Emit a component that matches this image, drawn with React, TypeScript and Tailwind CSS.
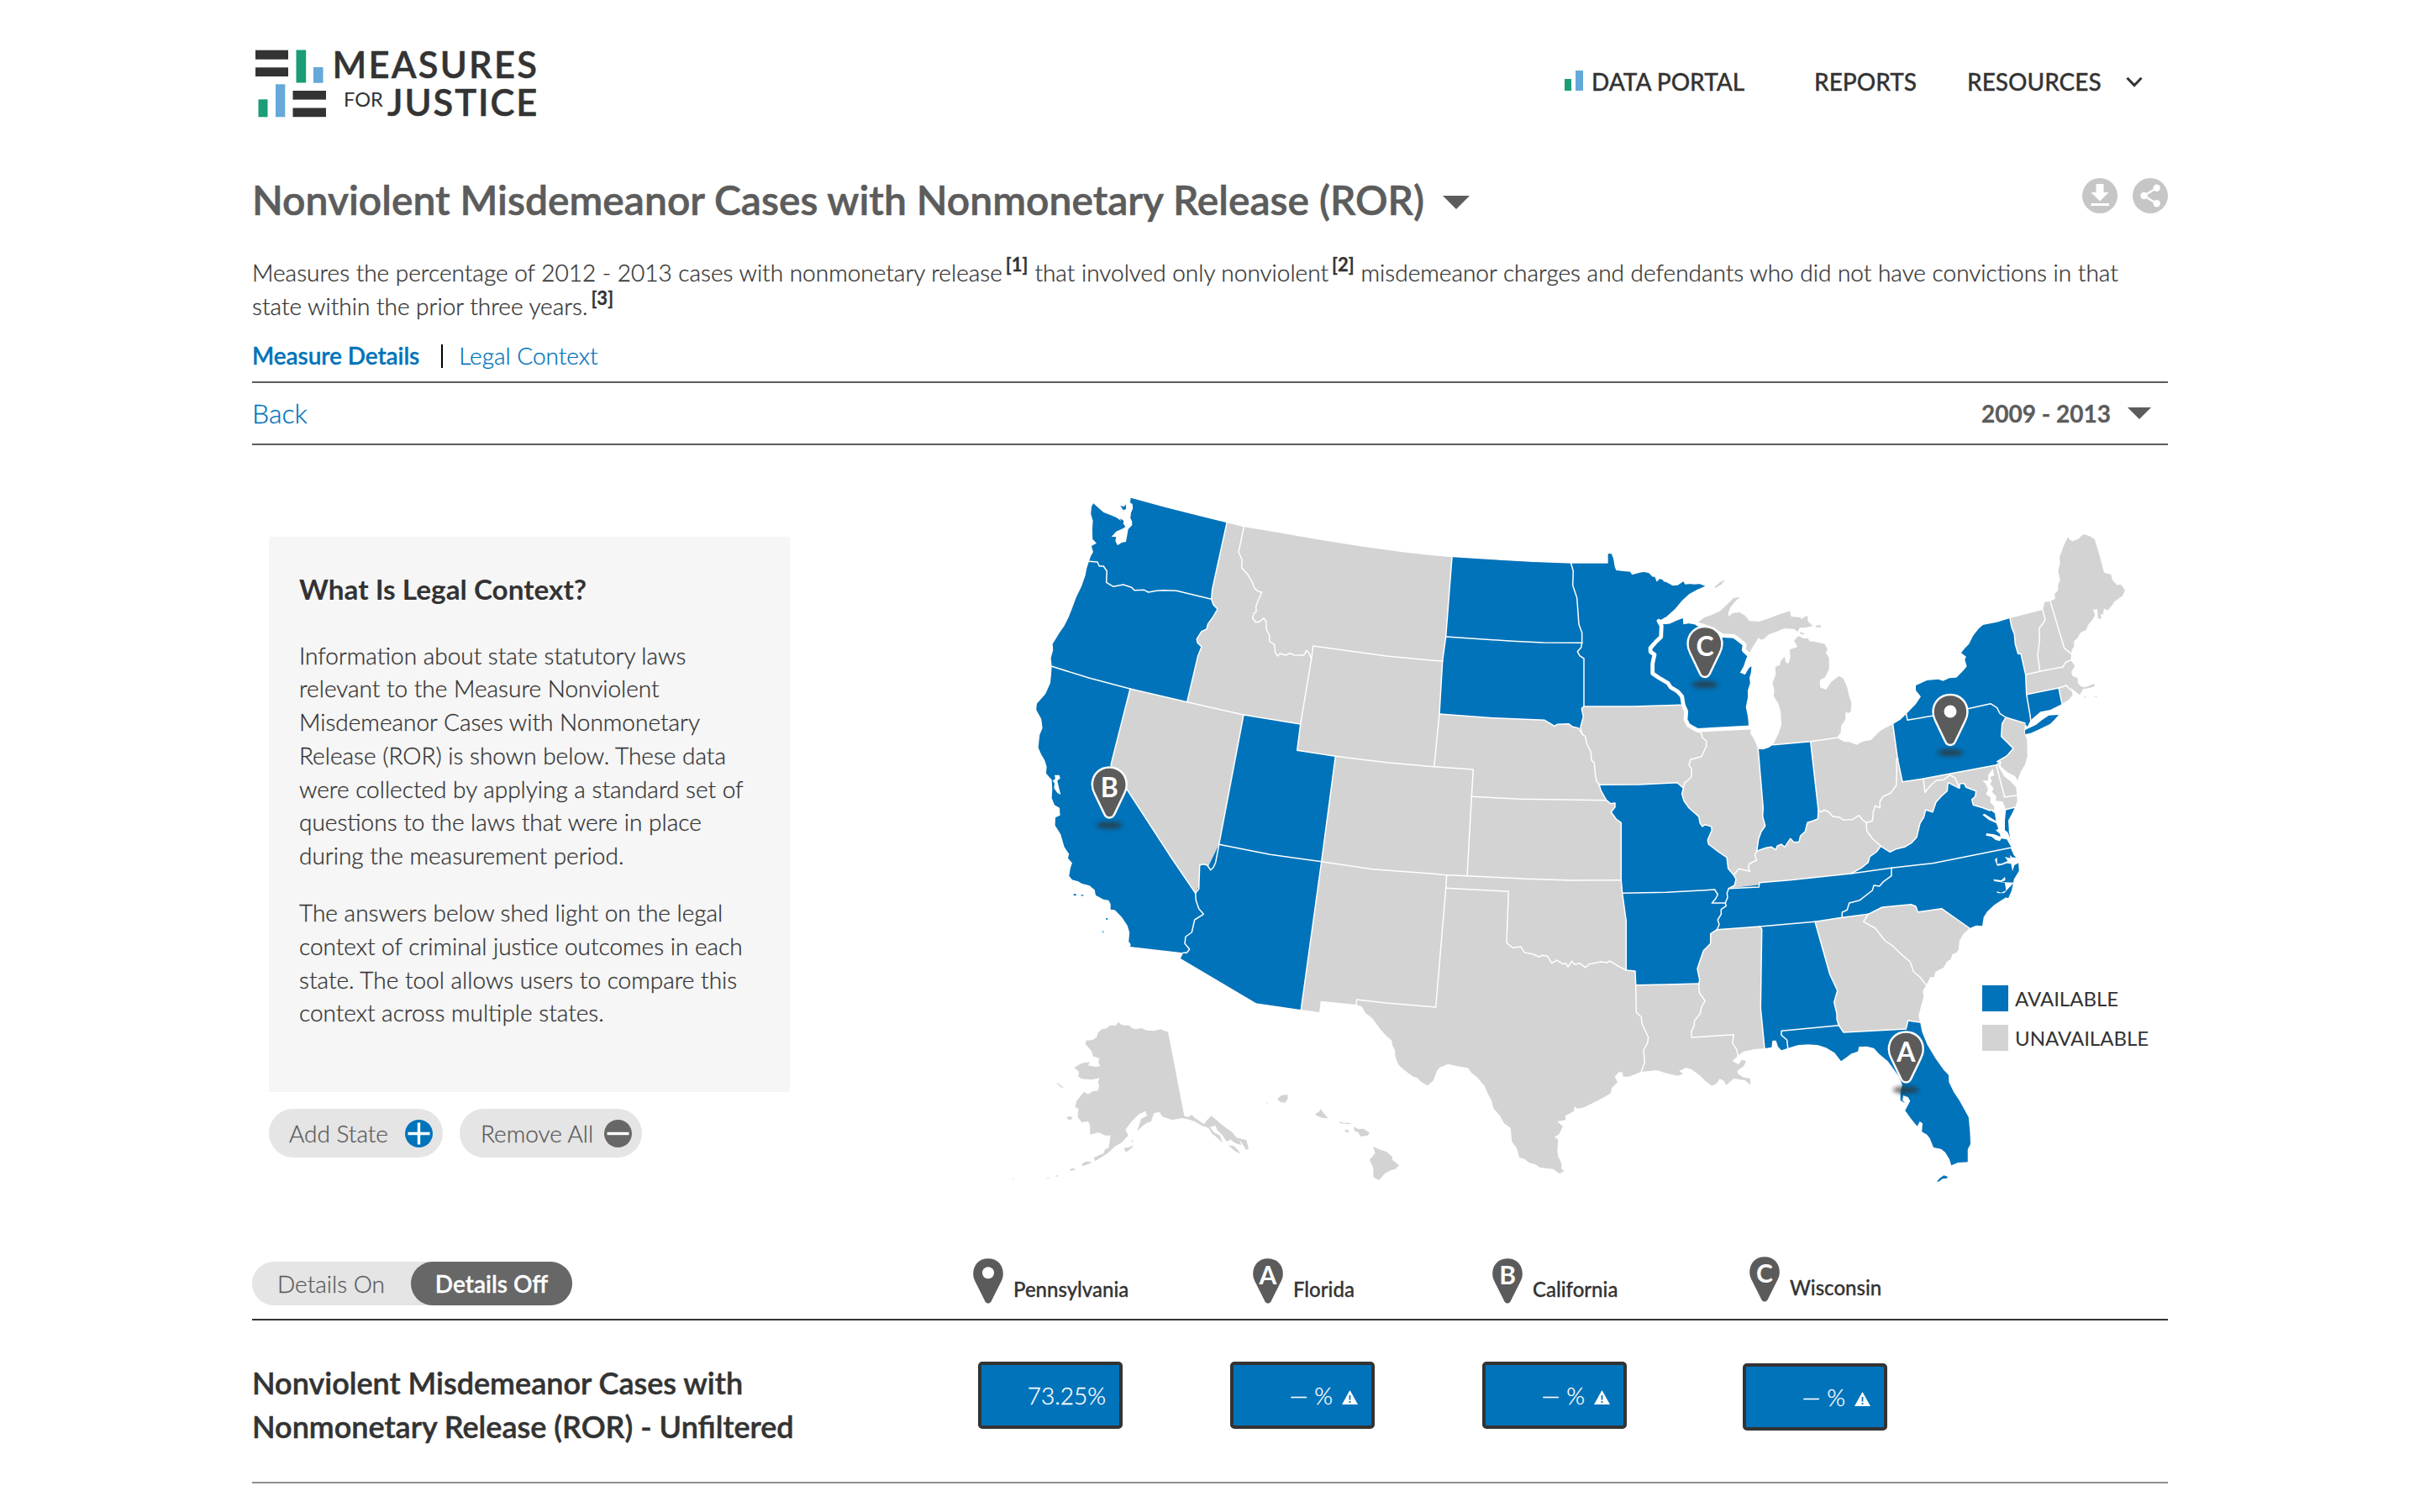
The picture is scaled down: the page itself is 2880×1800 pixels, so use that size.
import React from "react";

/* Boundary arcs. A bare number selects the tile whose local grid (three units
   per map unit) the following points use. */
const TILES: Record<string, [number, number]> = {
  "4": [1200, 570],
  "5": [1200, 950],
  "6": [1650, 630],
  "7": [1650, 980],
  "8": [2080, 600],
  "9": [2080, 980],
};

const ARCS: Record<string, string> = {
  // outer boundary, clockwise from the mouth of the Columbia
  cWa: "4 288,295 295,275 303,262 297,240 315,230 301,215 300,180 302,150 295,125 297,100 304,88 320,103 340,120 365,130 385,138 402,150 400,142 412,150 410,160 418,172 408,178 385,188 368,207 385,208 382,222 390,238 405,228 420,225 424,205 428,180 442,166 442,152 436,140 438,122 445,105 443,90 435,85 437,68 560,102 700,137 780,157",
  cId: "4 780,157 841,172",
  cMt: "4 841,172 960,191 1100,216 1250,240 1400,261 1500,272 6 234,100",
  cNd: "6 234,100 400,110 520,117 659,122",
  cMn: "6 659,122 791,122 791,88 803,88 810,105 815,135 820,147 845,150 870,152 877,163 888,160 905,155 920,153 937,157 950,170 958,170 965,188 975,178 985,180 990,187 1000,190 1022,202 1040,200 1060,187 1066,197 1085,196 1100,197 1118,196 1138,203 1110,215 1080,232 1055,255 1030,285 1000,312 972,328",
  cWiN: "6 972,328 985,340 1010,338 1035,327 1058,318 1060,340 1080,337 1110,342",
  cUp: "6 1110,334 1135,315 1160,307 1190,293 1215,270 1240,245 1262,243 1245,258 1228,280 1220,300 1222,312 1235,300 1260,297 1280,308 1295,328 1330,330 1360,320 1400,305 1440,292 1445,312 1480,315 8 190,412 212,398 215,420 232,435 205,442 185,442 178,456 165,446 130,445 100,457 75,465 60,480 48,485 38,478 15,515 0,540",
  cWiE: "6 1290,450 1283,465 1275,490 1262,512 1280,520 1295,495 1303,490 1302,510 1296,530 1298,550 1290,575 1290,600 1283,635 1290,670 1293,702",
  cIl: "6 1293,702 1300,712 1300,730 1315,755 1327,785",
  cIn: "6 1327,785 1345,787 1365,780 1380,770",
  cMi: "8 90,860 110,820 120,790 118,745 110,715 92,685 95,665 88,640 100,610 98,582 115,575 118,560 132,545 135,565 145,570 152,548 150,520 178,510 165,488 180,472 200,480 215,480 220,490 240,492 275,500 285,520 278,530 290,550 290,590 275,620 258,628 258,655 280,663 298,635 325,615 340,622 355,655 360,680 370,708 368,740 358,748 350,740 348,770 333,793 332,815 318,835",
  cOh: "8 318,835 345,850 360,850 390,860 410,848 440,843 470,812 490,800 518,787",
  cPa: "8 518,787 545,770 566,750",
  cNy: "8 566,750 600,715 618,688 600,665 600,648 640,630 680,626 697,632 720,622 745,620 770,595 782,580 775,555 780,545 762,532 775,515 790,500 805,470 825,445 840,432 890,422 936,408",
  cVt: "8 936,408 1053,378",
  cNh1: "8 1053,378 1060,350 1080,347",
  cMe: "8 1080,347 1098,338 1095,322 1108,308 1108,290 1115,270 1108,240 1115,210 1113,190 1130,145 1143,117 1150,128 1160,133 1180,125 1190,115 1200,108 1220,115 1238,125 1255,180 1272,245 1297,252 1302,272 1320,290 1332,287 1347,308 1338,328 1310,348 1300,362 1285,380 1272,373 1268,395 1260,392 1262,410 1250,408 1248,375 1232,378 1240,395 1232,412 1215,432 1208,450 1188,460 1178,478 1165,490 1165,510 1157,520 1155,535",
  cNh2: "8 1155,535 1153,558",
  cMa: "8 1153,558 1168,578 1155,600 1160,615 1178,622 1178,640 1190,652 1205,655 1235,642 1228,628 1240,650 1218,658 1198,660 1185,682 1168,668 1152,655",
  cRi: "8 1152,655 1160,682 1145,700 1122,714",
  cCt: "8 1122,714 1080,735 1045,742 1010,772",
  cNyc: "8 1010,772 998,795 990,785",
  cNj: "8 990,785 987,818 997,840 998,900 990,930 975,955 963,988 955,972 930,960 915,948 903,935 903,922",
  cDe: "8 903,922 893,935 905,955 915,972 940,992 948,1002 958,1012 961,1040",
  cMd: "8 961,1040 962,1060 955,1083",
  cVa: "8 955,1083 938,1120 932,1170 938,1200 940,1228",
  cNc: "9 938,88 950,115 965,130 968,170 950,200 942,240 930,268 922,265 905,275 880,292 855,315 842,335 837,367 815,365 792,375",
  cSc: "9 792,375 770,395 755,420 753,450 745,463 730,468 725,485 710,495 700,515 670,530 665,550 652,550 637,578",
  cGa: "9 637,578 625,600 628,620 618,655 610,688 615,711",
  cFl: "9 615,711 622,745 640,790 670,840 700,882 717,900 718,925 735,960 755,990 788,1050 793,1100 795,1145 785,1165 785,1210 750,1212 727,1222 720,1200 705,1175 690,1163 663,1158 650,1125 640,1112 622,1102 624,1072 614,1065 605,1082 585,1058 562,1026 580,992 572,978 555,972 552,990 562,1000 545,990 545,960 552,935 540,905 515,870 500,850 488,840 470,825 450,803 425,797 397,798 393,815 370,823 350,838 333,850 318,830 310,820 280,802 250,792 215,790 180,792 143,803",
  cAl: "9 143,803 120,811 108,798 101,776 88,776 85,800 60,804",
  cMs: "7 1350,804 1315,807 1275,815 1255,830",
  cLa: "7 1255,830 1235,850 1258,862 1268,845 1285,850 1275,868 1252,885 1255,895 1275,908 1298,912 1300,935 1280,918 1240,912 1213,935 1205,920 1190,913 1178,930 1162,938 1140,922 1118,900 1090,880 1070,873 1045,885 1060,895 1040,902 1000,893 965,882 910,888",
  cTx: "7 910,888 865,905 845,905 843,890 830,888 815,905 825,925 805,945 800,965 750,993 705,1015 682,1020 672,1012 668,1030 638,1045 640,1060 610,1065 630,1083 615,1112 600,1120 613,1130 610,1170 613,1190 625,1215 625,1235 635,1241 618,1252 595,1235 548,1230 530,1218 510,1213 490,1198 475,1195 465,1160 448,1138 443,1088 420,1072 405,1045 382,1018 375,990 363,968 350,938 322,905 305,893 290,873 262,870 220,860 190,872 180,885 168,918 147,937 125,925 110,910 95,905 65,883 42,862 32,835 30,810 22,795 18,775 0,760 5 1330,828 1300,787 1275,768 1262,745 1243,738",
  cNm: "5 1243,738 1115,725 1110,765 1045,756",
  cAz: "5 1045,756 885,733 615,573",
  cAzCa: "5 615,573 625,553",
  cCa: "5 625,553 435,531 437,522 430,513 433,480 425,455 405,425 380,400 365,398 365,378 358,365 340,362 312,347 308,328 290,313 262,305 250,298 228,292 217,278 222,250 228,232 213,215 217,200 200,175 187,130 178,115 167,98 168,70 185,62 183,35 165,25 155,0 4 157,1110 155,1075 135,1052 137,1028 130,1005 118,985 107,960 112,915 122,890 118,858 100,825 102,803 133,768 150,730 153,700 155,670",
  cOr: "4 155,670 152,640 160,612 158,590 183,550 200,525 215,495 225,470 243,422 262,383 275,345 280,320 288,295",
  // interior borders
  waOr: "4 288,295 318,297 325,312 340,312 352,330 350,370 375,385 410,378 440,388 450,398 485,397 500,405 530,400 555,398 600,400 725,430",
  waId: "4 780,157 728,395 725,430",
  orId: "4 725,430 732,450 747,465 730,495 712,520 708,537 690,545 673,572 675,585 690,600 677,632 638,797",
  orCa: "4 155,670 290,712 435,750",
  orNv: "4 435,750 638,797",
  idNv: "4 638,797 840,843",
  idUt: "4 840,843 1043,876",
  idMt: "4 841,172 822,262 835,290 833,318 855,342 870,368 880,392 893,403 905,405 892,435 884,455 885,475 877,480 872,498 884,513 898,510 912,497 920,510 922,540 932,558 932,580 950,592 953,622 962,633 970,624 990,630 1005,623 1020,629 1055,630 1065,613 1075,625 1082,643",
  mtWy: "4 1082,643 1088,597 1350,633 1500,647 6 200,471",
  mtNd: "6 234,100 212,384",
  mtSd: "6 212,384 200,471",
  idWy: "4 1082,643 1043,876",
  wyUt: "4 1043,876 1031,970 1168,991",
  wyCo: "4 1168,991 1350,1013 1500,1027 6 170,848",
  wySd: "6 200,471 189,660",
  wyNe: "6 189,660 170,848",
  caNv: "4 435,750 366,1022 425,1112 580,1350 5 668,340",
  nvUt: "4 840,843 752,1306",
  nvAz: "4 752,1306 5 740,230 732,248 722,257 710,240 695,236 683,240 680,325 668,340",
  caAz: "5 668,340 670,365 680,395 697,415 665,435 655,480 633,495 630,520 647,540 637,553 625,553",
  utAz: "4 752,1306 5 935,202 1118,227",
  utCo: "4 1168,991 5 1118,227",
  azNm: "5 1118,227 1045,756",
  coNm: "5 1118,227 1300,254 1500,269 7 215,185",
  coOk: "7 215,185 288,188",
  coNe: "6 170,848 310,858 304,955",
  coKs: "6 304,955 288,1238",
  ksOk: "7 288,188 500,199 660,204 838,203",
  neKs: "6 304,955 480,964 785,968",
  ndSd: "6 212,384 450,400 560,405 698,406",
  ndMn: "6 659,122 667,150 665,200 680,245 687,340 698,370 698,406",
  sdMn: "6 698,406 695,422 682,437 690,452 705,462 705,633",
  sdNe: "6 189,660 380,674 565,682 600,703 610,697 650,695 665,706 685,710 700,733",
  sdIa: "6 705,633 697,640 703,670 692,710 700,733",
  mnIa: "6 705,633 880,633 1050,628",
  neIa: "6 700,733 710,740 715,765 730,795 732,825 742,835 745,870 750,900 760,913",
  neMo: "6 760,913 765,932 785,968",
  ksMo: "6 785,968 800,980 816,978 816,992 802,1010 820,1035 838,1048 838,1253",
  iaMo: "6 760,913 900,912 1038,905 1060,925",
  mnWi: "6 972,328 982,345 980,385 962,402 942,425 943,438 957,448 950,480 950,515 972,530 1005,550 1015,565 1040,580 1055,597 1060,628",
  wiIa: "6 1060,628 1070,650 1068,680 1078,700 1110,718",
  wiIl: "6 1110,718 1300,708",
  wiMi: "6 1110,338 1150,352 1200,380 1240,382 1262,398 1278,412 1276,432 1292,448",
  iaIl: "6 1110,718 1125,730 1128,745 1142,757 1142,775 1130,800 1125,812 1085,823 1080,842 1090,858 1088,885 1075,898 1065,905 1060,925",
  moIl: "6 1060,925 1055,945 1062,970 1080,995 1115,1027 1120,1050 1128,1062 1138,1055 1160,1062 1162,1075 1147,1110 1150,1125 1185,1152 1215,1172 1220,1212 1240,1235",
  moKy: "6 1240,1235 1248,1250 1243,1272 1222,1283",
  moTn: "6 1222,1283 1216,1300 1218,1315 1210,1335",
  moOk: "6 838,1253 842,1300",
  moAr: "6 842,1300 1000,1297 1172,1287 1183,1305 1175,1320 1162,1335 1210,1335",
  okAr: "7 842,250 856,350 856,525",
  nmOk: "7 215,185 212,232",
  okTx: "7 212,232 436,244 429,427 450,445 480,441 492,462 522,467 545,478 555,472 575,475 590,500 608,489 630,503 640,500 648,513 662,493 672,505 690,500 710,515 725,503 765,495 787,498 797,492 830,512 856,525",
  nmTx: "7 212,232 176,657 0,642 5 1243,720 1243,738",
  txAr: "7 856,525 888,528 890,578",
  arLa: "7 890,578 1000,576 1115,573",
  txLa: "7 890,578 892,675 910,692 912,715 935,765 932,785 918,810 922,855 910,888",
  arTn: "7 1210,285 1213,295 1195,308 1195,325 1183,345 1188,362 1180,380",
  arMs: "7 1180,380 1157,395 1157,430 1132,455 1120,490 1110,520 1118,560 1115,573",
  laMs: "7 1115,573 1117,605 1138,635 1125,655 1120,680 1100,705 1098,725 1088,745 1090,765 1240,755 1235,785 1250,808 1255,830",
  ilIn: "6 1327,785 1345,995 1343,1025 1352,1060 1338,1080 1328,1108 1322,1150",
  ilKy: "6 1322,1150 1315,1165 1322,1182 1295,1195 1292,1210 1298,1222 1258,1213 1240,1235",
  inKy: "8 32,1240 65,1228 85,1225 100,1235 105,1222 120,1215 132,1225 152,1195 165,1208 183,1207 188,1185 205,1170 213,1138 228,1133 250,1125 252,1095",
  inMi: "8 90,860 224,848",
  ohMi: "8 224,848 318,835",
  inOh: "8 224,848 252,1095",
  ohKy: "8 252,1095 265,1100 272,1093 290,1100 302,1115 330,1120 340,1128 375,1127 397,1112 410,1128 423,1138",
  ohWv: "8 423,1138 445,1132 448,1100 455,1078 472,1085 472,1062 482,1045 510,1033 530,1005 532,950 530,912 537,910",
  ohPa: "8 518,787 535,910",
  paWv: "8 535,910 552,992 627,981",
  paMd: "8 627,981 887,932",
  paDe: "8 887,932 903,922",
  wvKy: "8 423,1138 425,1168 445,1195 475,1222",
  kyVa: "8 475,1222 460,1242 435,1260 430,1280 405,1300 368,1320",
  kyTn: "9 368,180 150,203 42,212 40,228 7 1222,233",
  tnVa: "9 368,180 513,160",
  vaNc: "9 513,160 660,143 938,88",
  tnNc: "9 513,160 513,188 485,208 470,225 450,222 445,240 400,275 362,285 355,310 337,318 337,337",
  tnGa: "9 337,337 240,352",
  tnAl: "9 240,352 42,369",
  tnMs: "9 42,369 7 1180,380",
  ncGa: "9 337,337 430,325",
  ncSc: "9 430,325 480,300 583,290 600,297 607,317 692,305 792,375",
  gaSc: "9 430,325 413,352 455,375 490,420 520,440 550,470 580,495 592,530 615,550 637,578",
  msAl: "9 42,369 50,378 46,660 60,804",
  alGa: "9 240,352 293,540 320,598 308,640 318,680 318,700 325,722",
  alFl: "9 325,722 120,742 120,757 140,775 143,803",
  gaFl: "9 325,722 342,747 565,735 572,705 615,711",
  nyPa: "8 566,750 570,772 700,750 867,713 890,728 900,748 921,762",
  nyNj: "8 921,762 990,783",
  paNj: "8 921,762 908,785 905,830 925,850 948,873 925,900 890,920 903,922",
  nyVt: "8 936,408 942,440 952,465 955,500 965,535 975,535 992,610",
  nyMa: "8 992,610 995,680",
  nyCt: "8 995,680 1008,755 1010,772",
  vtNh: "8 1053,378 1062,415 1040,445 1042,485 1035,540 1043,598",
  vtMa: "8 992,610 1043,598",
  nhMa: "8 1043,598 1125,582 1135,565 1153,558",
  nhMe: "8 1080,347 1130,515 1155,535",
  maCt: "8 995,680 1110,657",
  ctRi: "8 1110,657 1122,714",
  maRi: "8 1110,657 1138,648 1152,665",
  mdDe: "8 887,932 917,1047 961,1040",
  mdVaShore: "8 918,1092 955,1083",
  mdWv: "8 627,983 633,1030 650,1008 672,988 700,985 722,968 740,978 755,1013",
  vaWv: "8 755,1015 715,995 712,1025 690,1045 672,1065 660,1100 635,1092 628,1120 615,1140 603,1190 585,1210 560,1225 530,1232 508,1243 475,1222",
  vaMd: "8 755,1015 758,998 772,998 780,1012 815,1025 812,1045 800,1055 805,1075 840,1085 865,1095",
};

type Pt = [number, number];
const toPoints = (s: string): Pt[] => {
  let o: [number, number] = [0, 0];
  const out: Pt[] = [];
  for (const t of s.split(" ")) {
    if (t in TILES) o = TILES[t];
    else {
      const [x, y] = t.split(",").map(Number);
      out.push([o[0] + x / 3, o[1] + y / 3]);
    }
  }
  return out;
};
const dist = (a: Pt, b: Pt) => Math.hypot(a[0] - b[0], a[1] - b[1]);
const ring = (names: string) => {
  const out: Pt[] = [];
  for (const n of names.split(" ")) {
    const p = toPoints(ARCS[n]);
    const last = out[out.length - 1];
    if (last && dist(last, p[p.length - 1]) < dist(last, p[0])) p.reverse();
    out.push(...p);
  }
  return out;
};
const path = (pts: Pt[], close = true) =>
  "M" + pts.map((p) => p[0].toFixed(1) + " " + p[1].toFixed(1)).join("L") + (close ? "Z" : "");

const MAINLAND =
  "cWa cId cMt cNd cMn cWiN cUp cWiE cIl cIn cMi cOh cPa cNy cVt cNh1 cMe cNh2 cMa cRi cCt cNyc cNj cDe cMd cVa cNc cSc cGa cFl cAl cMs cLa cTx cNm cAz cAzCa cCa cOr";

const AVAILABLE = [
  "cWa waId waOr",
  "waOr orId orNv orCa cOr",
  "orCa caNv caAz cCa",
  "idUt wyUt utCo utAz nvUt",
  "nvAz utAz azNm cAz cAzCa caAz",
  "cNd ndMn ndSd mtNd",
  "ndSd sdMn sdIa sdNe wySd mtSd",
  "cMn mnWi mnIa sdMn ndMn",
  "cWiN wiMi cWiE wiIl wiIa mnWi",
  "iaMo moIl moKy moTn moAr moOk ksMo neMo",
  "moAr arTn arMs arLa txAr okAr",
  "inMi inOh inKy ilIn cIn",
  "kyTn tnVa tnNc tnGa tnAl tnMs arTn moTn",
  "tnAl alGa alFl cAl msAl",
  "gaFl cFl alFl",
  "cNy nyVt nyMa nyCt cNyc nyNj nyPa",
  "nyPa paNj paDe paMd paWv ohPa cPa",
  "maCt ctRi cCt nyCt",
  "vaMd mdVaShore cVa vaNc tnVa kyVa vaWv",
  "vaNc cNc ncSc ncGa tnNc",
];

const NEAR_THICK = ["mnWi", "wiIa", "wiIl", "wiMi"];
const INTERIOR = Object.keys(ARCS).filter((k) => !/^c[A-Z]/.test(k) && !NEAR_THICK.includes(k));

const BLUE_ISLANDS = [
  "8 998,803 1030,788 1050,772 1075,755 1110,753 1095,770 1080,785 1040,805 1010,818 990,822 990,808",
  "9 675,1280 685,1268 700,1258 713,1262 712,1268 695,1270 682,1280",
  "5 232,343 240,343 244,348 235,349",
  "5 258,346 268,346 268,350 260,349",
  "5 348,429 355,430 354,435 349,434",
  "5 335,472 341,480 338,482",
  "4 400,95 412,100 420,92 420,108 410,112",
];

const WATER = [
  "8 875,945 880,970 865,975 872,990 865,1000 878,1015 872,1028 888,1045 885,1060 910,1062 922,1092 918,1130 918,1165 928,1172 938,1195 940,1225 925,1198 905,1195 900,1204 885,1200 870,1188 850,1184 852,1176 880,1180 902,1188 900,1178 885,1165 895,1160 887,1140 860,1128 838,1110 845,1106 870,1122 886,1132 882,1105 865,1092 845,1088 880,1092 880,1080 865,1065 868,1050 850,1035 858,1020 850,1000 838,988 858,988 858,968",
  "8 955,1083 975,1083 975,1175 933,1175 930,1130 938,1115",
  "9 890,122 882,130 890,152 905,150 925,143 940,145 945,172 952,150 970,140 962,122 945,122 935,113 938,125 918,120 928,135 905,145 890,145",
  "9 877,200 905,204 918,192 920,203 905,210 950,212 935,228 915,250 892,250 888,243 905,248 922,240 918,213 880,207",
  "4 158,1078 168,1072 165,1058 182,1058 185,1070 175,1078 180,1100 187,1128 175,1122 163,1105 165,1088",
];

const GRAY_ISLANDS = [
  // Alaska
  "5 570,835 628,1135 640,1140 655,1132 665,1142 700,1165 705,1155 725,1135 760,1165 800,1195 815,1213 850,1222 858,1250 850,1258 838,1238 825,1220 832,1240 810,1232 790,1218 780,1228 765,1205 745,1185 740,1170 720,1175 735,1195 755,1205 765,1232 745,1212 728,1200 715,1178 690,1170 665,1155 645,1148 620,1143 585,1150 550,1138 540,1122 520,1125 510,1155 495,1160 478,1172 460,1190 468,1165 475,1145 495,1135 490,1118 465,1130 440,1155 418,1185 428,1205 405,1230 380,1245 350,1272 310,1297 305,1285 325,1275 340,1270 345,1255 358,1250 365,1205 345,1205 335,1200 320,1195 292,1202 292,1170 285,1155 262,1158 248,1140 250,1110 238,1103 245,1080 270,1050 285,1058 300,1048 320,1045 325,1030 320,1015 326,1000 298,1006 262,1003 250,995 252,978 235,962 262,947 290,943 285,955 310,960 328,958 322,945 325,930 302,922 298,905 275,878 278,866 300,865 315,855 320,838 335,825 350,823 362,812 385,812 393,799 400,808 412,812 432,812 440,822 455,826 475,822 495,830 520,832 545,826 560,833",
  "5 412,1250 430,1248 447,1240 440,1250 420,1265",
  "5 207,1140 225,1137 228,1147 215,1150",
  "5 165,1015 180,1020 190,1030 200,1033 188,1034 175,1020",
  "5 262,1308 275,1298 300,1300 285,1308 265,1315",
  "5 217,1330 228,1322 243,1325 225,1331",
  "5 785,1240 805,1243 820,1258 830,1271 808,1260",
  "5 775,1212 792,1212 790,1224 778,1222",
  "5 132,1362 145,1354 148,1356",
  "5 168,1350 176,1346 175,1354",
  "5 438,1225 448,1222 442,1230",
  "5 10,1358 22,1360 20,1362",
  // Hawaii
  "5 960,1075 975,1062 997,1060 998,1073 988,1088 970,1085",
  "5 920,1092 930,1084 924,1092",
  "5 1096,1127 1108,1122 1116,1110 1125,1124 1142,1144 1120,1142 1100,1134",
  "5 1180,1156 1200,1160 1225,1160 1215,1165 1185,1161",
  "5 1200,1184 1217,1187 1213,1195 1205,1193",
  "5 1232,1174 1250,1183 1268,1181 1290,1196 1283,1205 1258,1209 1248,1193 1237,1190",
  "5 1302,1245 1328,1256 1350,1263 1370,1280 1372,1293 1395,1312 1382,1325 1365,1330 1345,1340 1323,1365 1303,1353 1303,1320 1290,1292 1310,1268",
  // Great Lakes and New England
  "6 1170,208 1190,190 1210,180 1195,198 1175,210",
  "8 240,436 258,432 262,441 245,440",
  "8 185,455 205,465 190,466",
  "8 1198,690 1208,687 1205,692",
  "8 1236,688 1246,686 1247,691",
];

const GLYPH = "Lato, sans-serif";

function Pin({ x, y, letter, shadow }: { x: number; y: number; letter?: string; shadow?: boolean }) {
  return (
    <g transform={`translate(${x} ${y})`}>
      {shadow && <ellipse cx="0" cy="71" rx="15.5" ry="4.5" fill="#333" opacity=".68" filter="url(#soft)" />}
      <path
        d="M0 3.2C-11.2 3.2 -19.2 11.4 -19.2 22.5C-19.2 27 -17.8 30.3 -16.2 33.5L-4.7 57.5C-2.6 61.8 2.6 61.8 4.7 57.5L16.2 33.5C17.8 30.3 19.2 27 19.2 22.5C19.2 11.4 11.2 3.2 0 3.2Z"
        fill="#5b5b5b"
        stroke="#fff"
        strokeWidth="5"
        paintOrder="stroke"
      />
      {letter ? (
        <text x="0" y="37" textAnchor="middle" fontFamily={GLYPH} fontWeight="700" fontSize="32" fill="#fff">
          {letter}
        </text>
      ) : (
        <circle cx="0" cy="22" r="7.5" fill="#fff" />
      )}
    </g>
  );
}

function UsMap() {
  return (
    <svg className="block" width="1460" height="870" viewBox="1120 570 1460 870">
      <defs>
        <filter id="soft" x="-50%" y="-150%" width="200%" height="400%">
          <feGaussianBlur stdDeviation="2.8" />
        </filter>
      </defs>
      <path d={path(ring(MAINLAND))} fill="#d3d3d3" />
      {GRAY_ISLANDS.map((s, i) => (
        <path key={i} d={path(toPoints(s))} fill="#d3d3d3" />
      ))}
      {AVAILABLE.map((s, i) => (
        <path key={i} d={path(ring(s))} fill="#0073ba" />
      ))}
      {WATER.map((s, i) => (
        <path key={i} d={path(toPoints(s))} fill="#fff" />
      ))}
      {BLUE_ISLANDS.map((s, i) => (
        <path key={i} d={path(toPoints(s))} fill="#0073ba" />
      ))}
      <g fill="none" stroke="#fff" strokeWidth="1.5" strokeLinejoin="round" strokeLinecap="round">
        {INTERIOR.map((k) => (
          <path key={k} d={path(toPoints(ARCS[k]), false)} />
        ))}
      </g>
      <g fill="none" stroke="#fff" strokeWidth="4.8" strokeLinejoin="round" strokeLinecap="round">
        {NEAR_THICK.map((k) => (
          <path key={k} d={path(toPoints(ARCS[k]), false)} />
        ))}
      </g>
      <Pin x={1320.3} y={911.5} letter="B" shadow />
      <Pin x={2029} y={744} letter="C" shadow />
      <Pin x={2268.3} y={1226.5} letter="A" shadow />
      <Pin x={2321} y={825} shadow />
    </svg>
  );
}

function Logo() {
  return (
    <svg className="-mt-[14px] block" width="365" height="110" viewBox="300 45 365 110">
      <g fill="#333">
        <rect x="304" y="59.7" width="39" height="11" />
        <rect x="304" y="80.3" width="39" height="10.7" />
        <rect x="348.5" y="108" width="39.5" height="10.6" />
        <rect x="348.5" y="128.5" width="39.5" height="10.7" />
      </g>
      <g fill="#1b9e77">
        <rect x="352.5" y="59.5" width="11.7" height="39" />
        <rect x="307.5" y="118.3" width="11" height="21" />
      </g>
      <g fill="#64a9d8">
        <rect x="373" y="80" width="11.5" height="18.7" />
        <rect x="328" y="100.3" width="11.3" height="39" />
      </g>
      <g fill="#333" fontFamily={GLYPH}>
        <text x="395.5" y="93" fontSize="43.5" fontWeight="600" letterSpacing="2.2" stroke="#333" strokeWidth=".5">
          MEASURES
        </text>
        <text x="409" y="127" fontSize="23.5" stroke="none">
          FOR
        </text>
        <text x="461" y="138" fontSize="43.5" fontWeight="600" letterSpacing="1.9" stroke="#333" strokeWidth=".5">
          JUSTICE
        </text>
      </g>
    </svg>
  );
}

const Caret = ({ w, h }: { w: number; h: number }) => (
  <svg width={w} height={h} viewBox="0 0 10 5" preserveAspectRatio="none">
    <path d="M0 0h10l-5 5z" fill="#5c5c5c" />
  </svg>
);

const Sup = ({ children }: { children: React.ReactNode }) => (
  <span className="relative -top-[12px] mr-[0.4px] ml-[4px] text-[22px] leading-none font-bold">{children}</span>
);

function HeadPin({ letter }: { letter?: string }) {
  return (
    <svg className="block shrink-0" width="36" height="54" viewBox="-18 3.2 36 54">
      <path
        d="M0 3.4C-10.6 3.4 -17.8 11 -17.8 21.4C-17.8 25.5 -16.6 28.6 -15 31.8L-3.6 54.4C-1.8 57.6 1.8 57.6 3.6 54.4L15 31.8C16.6 28.6 17.8 25.5 17.8 21.4C17.8 11 10.6 3.4 0 3.4Z"
        fill="#5b5b5b"
      />
      {letter ? (
        <text x="0" y="34.5" textAnchor="middle" fontFamily={GLYPH} fontWeight="700" fontSize="30" fill="#fff">
          {letter}
        </text>
      ) : (
        <circle cx="0" cy="20.5" r="7" fill="#fff" />
      )}
    </svg>
  );
}

function StateHead({ name, letter, className }: { name: string; letter?: string; className: string }) {
  return (
    <div className={`flex items-start gap-[12px] ${className}`}>
      <HeadPin letter={letter} />
      <span className="mt-[21px] text-[24px] leading-[32px] font-medium text-[#333]">{name}</span>
    </div>
  );
}

function ValueBox({ value, className = "mt-[49px]" }: { value?: string; className?: string }) {
  return (
    <div
      className={`flex h-[80px] w-[172px] items-center justify-end rounded-[5px] border-4 border-[#333] bg-[#0073ba] pr-[16px] text-[28px] font-light text-white ${className}`}
    >
      {value ?? (
        <>
          <span>— %</span>
          <svg className="mt-[4px] ml-[11px]" width="19" height="17" viewBox="0 0 19 17">
            <path d="M9.5 0 19 17H0z" fill="#fff" />
            <path d="M9.5 6v5.4M9.5 13v2" stroke="#0073ba" strokeWidth="1.8" />
          </svg>
        </>
      )}
    </div>
  );
}

const COLS = "grid grid-cols-[864px_300px_300px_310px_1fr]";

export default function App() {
  return (
    <div className="h-[1800px] w-[2880px] overflow-hidden bg-white pl-[300px] font-[Lato,sans-serif] text-[#333] [-webkit-text-stroke:0.3px]">
      <div className="w-[2280px]">
        <header className="flex h-[200px] items-start justify-between pt-[59px]">
          <Logo />
          <nav className="mt-[24px] mr-[30px] flex w-[688px] items-start text-[28px] leading-[28px] font-medium">
            <a className="flex w-[297px] items-end">
              <svg className="mr-[10px] mb-[3px]" width="22" height="24" viewBox="0 0 22 24">
                <rect x="0" y="10" width="8" height="14" fill="#1b9e77" />
                <rect x="13" y="0" width="9" height="24" fill="#64a9d8" />
              </svg>
              DATA PORTAL
            </a>
            <a className="w-[182px]">REPORTS</a>
            <a className="flex flex-1 items-center justify-between">
              RESOURCES
              <svg width="20" height="13" viewBox="0 0 20 13">
                <path d="M1.5 1.8 10 10.6 18.5 1.8" fill="none" stroke="#333" strokeWidth="3" />
              </svg>
            </a>
          </nav>
        </header>

        <div className="mt-[7px] flex h-[60px] items-start justify-between">
          <h1 className="mt-[1px] flex items-center text-[48px] leading-[60px] font-semibold text-[#5c5c5c] [-webkit-text-stroke:0.6px]">
            Nonviolent Misdemeanor Cases with Nonmonetary Release (ROR)
            <span className="mt-[5px] ml-[22px] flex">
              <Caret w={32} h={16} />
            </span>
          </h1>
          <div className="mt-[5px] flex gap-[18px]">
            <svg width="42" height="42" viewBox="0 0 42 42">
              <circle cx="21" cy="21" r="21" fill="#c6c6c6" />
              <path d="M16.5 7h9v10h6L21 27.500 10.500 17h6zM10.500 30h21.500v3H10.500z" fill="#fff" />
            </svg>
            <svg width="42" height="42" viewBox="0 0 42 42">
              <circle cx="21" cy="21" r="21" fill="#c6c6c6" />
              <path d="M29 11.500 13.500 21 29 30.500" fill="none" stroke="#fff" strokeWidth="2.600" />
              <circle cx="28.700" cy="11.800" r="4.200" fill="#fff" />
              <circle cx="13.500" cy="21" r="4.200" fill="#fff" />
              <circle cx="28.700" cy="30.200" r="4.200" fill="#fff" />
            </svg>
          </div>
        </div>

        <p className="mt-[37px] h-[81px] text-[28px] leading-[40px] font-light whitespace-nowrap">
          Measures the percentage of 2012 - 2013 cases with nonmonetary release<Sup>[1]</Sup> that involved only
          nonviolent<Sup>[2]</Sup> misdemeanor charges and defendants who did not have convictions in that
          <br />
          state within the prior three years.<Sup>[3]</Sup>
        </p>

        <div className="mt-[18px] flex h-[53px] items-start border-b-2 border-[#5c5c5c] text-[28px] leading-[40px] text-[#0073ba]">
          <a className="font-semibold tracking-[-0.08px]">Measure Details</a>
          <span className="mt-[7px] ml-[26px] h-[28px] w-[2px] bg-black" />
          <a className="ml-[19px] font-light">Legal Context</a>
        </div>

        <div className="flex h-[74px] items-center justify-between border-b-2 border-[#5c5c5c] pr-[20px]">
          <a className="text-[32px] font-light text-[#0073ba]">Back</a>
          <span className="flex items-center text-[28px] font-bold text-[#5c5c5c]">
            2009 - 2013
            <span className="ml-[20px] flex">
              <Caret w={28} h={14} />
            </span>
          </span>
        </div>

        <main className="flex h-[950px] items-start">
          <section className="w-[820px] pt-[109px] pl-[20px]">
            <div className="h-[661px] w-[620px] bg-[#f6f6f6] pt-[42px] pl-[36px]">
              <h2 className="text-[33.3px] leading-[40px] font-bold [-webkit-text-stroke:0px]">What Is Legal Context?</h2>
              <p className="mt-[39.500px] w-[540px] text-[28px] leading-[39.8px] font-light">
                Information about state statutory laws relevant to the Measure Nonviolent Misdemeanor Cases with
                Nonmonetary Release (ROR) is shown below. These data were collected by applying a standard set of
                questions to the laws that were in place during the measurement period.
              </p>
              <p className="mt-[28px] w-[540px] text-[28px] leading-[39.8px] font-light">
                The answers below shed light on the legal context of criminal justice outcomes in each state. The tool
                allows users to compare this context across multiple states.
              </p>
            </div>
            <div className="mt-[20px] flex gap-[20px] text-[28px] font-light text-[#5b5b5b]">
              <button className="flex h-[58px] w-[207px] items-center justify-between rounded-full bg-[#e5e5e5] pr-[12px] pl-[24px]">
                Add State
                <svg width="33" height="33" viewBox="0 0 33 33">
                  <circle cx="16.5" cy="16.5" r="16.5" fill="#0073ba" />
                  <path d="M16.5 3.500v26M3.500 16.5h26" stroke="#fff" strokeWidth="3.400" />
                </svg>
              </button>
              <button className="flex h-[58px] w-[217px] items-center justify-between rounded-full bg-[#e5e5e5] pr-[12px] pl-[25px]">
                Remove All
                <svg width="33" height="33" viewBox="0 0 33 33">
                  <circle cx="16.5" cy="16.5" r="16.5" fill="#676767" />
                  <path d="M3.500 16.5h26" stroke="#fff" strokeWidth="3.400" />
                </svg>
              </button>
            </div>
          </section>
          <section className="relative mt-[40px]">
            <UsMap />
            <div className="absolute top-[603px] left-[1239px] flex flex-col gap-[16px] text-[24px] [-webkit-text-stroke:0px]">
              <div className="flex h-[31px] items-center gap-[8px]">
                <span className="h-[31px] w-[31px] bg-[#0073ba]" />
                AVAILABLE
              </div>
              <div className="flex h-[31px] items-center gap-[8px]">
                <span className="h-[31px] w-[31px] bg-[#d3d3d3]" />
                UNAVAILABLE
              </div>
            </div>
          </section>
        </main>

        <div className={`${COLS} h-[92px] border-b-2 border-[#333]`}>
          <div className="mt-[22px] flex h-[52px] w-[381px] items-center rounded-full bg-[#e5e5e5] text-[28px]">
            <span className="w-[189px] pl-[30px] font-light text-[#5b5b5b]">Details On</span>
            <span className="flex h-[52px] w-[192px] items-center justify-center rounded-full bg-[#676767] font-semibold text-white">
              Details Off
            </span>
          </div>
          <StateHead name="Pennsylvania" className="-ml-[6px] pt-[18px]" />
          <StateHead name="Florida" letter="A" className="pt-[18px] pl-[27px]" />
          <StateHead name="California" letter="B" className="pt-[18px] pl-[12px]" />
          <StateHead name="Wisconsin" letter="C" className="pt-[16px] pl-[8px]" />
        </div>

        <div className={`${COLS} h-[194px] border-b-2 border-[#8f8f8f]`}>
          <h3 className="pt-[48px] text-[36px] leading-[52px] font-semibold [-webkit-text-stroke:0.5px]">
            Nonviolent Misdemeanor Cases with
            <br />
            Nonmonetary Release (ROR) - Unfiltered
          </h3>
          <ValueBox value="73.25%" />
          <ValueBox />
          <ValueBox />
          <ValueBox className="mt-[51px]" />
        </div>
      </div>
    </div>
  );
}
